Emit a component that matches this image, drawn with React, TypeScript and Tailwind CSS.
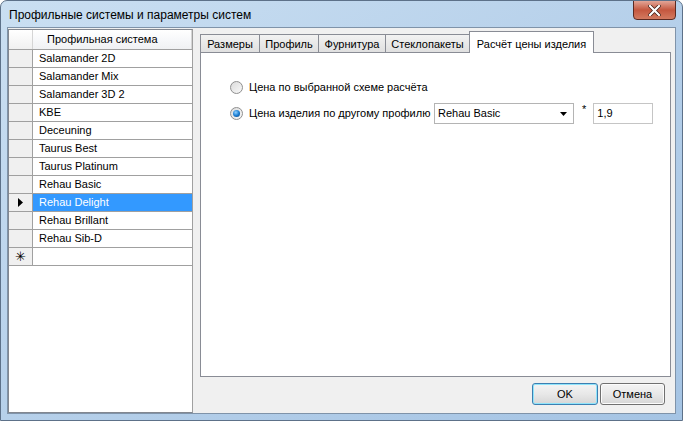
import React from 'react';

const systems = [
  'Salamander 2D',
  'Salamander Mix',
  'Salamander 3D 2',
  'KBE',
  'Deceuning',
  'Taurus Best',
  'Taurus Platinum',
  'Rehau Basic',
  'Rehau Delight',
  'Rehau Brillant',
  'Rehau Sib-D',
];

const tabs = [
  { label: 'Размеры', w: 'w-[60px]' },
  { label: 'Профиль', w: 'w-[60px]' },
  { label: 'Фурнитура', w: 'w-[68px]' },
  { label: 'Стеклопакеты', w: 'w-[85px]' },
];

function Radio({ checked }: { checked?: boolean }) {
  return (
    <span className="flex h-[13px] w-[13px] items-center justify-center rounded-full border border-[#8f8f8f] bg-gradient-to-br from-[#dcdcdc] to-[#f8f8f8]">
      {checked && (
        <span className="h-[7px] w-[7px] rounded-full bg-[radial-gradient(circle_at_40%_35%,#8fd0ff_0%,#1c7fd4_50%,#0a3f7a_100%)]" />
      )}
    </span>
  );
}

export default function App() {
  const selected = 8;

  return (
    <div
      className="flex h-[421px] w-[683px] flex-col overflow-hidden rounded-t-[7px] border border-[#5d7189] bg-gradient-to-br from-[#cadff2] via-[#b6d0ea] to-[#a5c4e4] text-[11px] text-black"
      style={{ fontFamily: '"Liberation Sans", Arial, sans-serif' }}
    >
      {/* title bar */}
      <div className="relative flex h-[26px] shrink-0 items-center pl-[8px] pt-[2px]">
        <span className="text-[12px] text-black">Профильные системы и параметры систем</span>
        <div className="absolute right-[6px] top-[-1px] flex h-[20px] w-[43px] items-center justify-center rounded-b-[4px] border border-[#5b2a22] bg-gradient-to-b from-[#e2a597] via-[#c4573f] to-[#d27a60]">
          <svg width="13" height="11" viewBox="0 0 13 11">
            <path d="M2 1 L11 10 M11 1 L2 10" stroke="#3c1a12" strokeWidth="3.6" strokeLinecap="square" />
            <path d="M2 1 L11 10 M11 1 L2 10" stroke="#ffffff" strokeWidth="2.2" strokeLinecap="square" />
          </svg>
        </div>
      </div>

      {/* client area */}
      <div className="mx-[6px] mb-[6px] flex flex-1 flex-col border border-[#7f93a9] bg-[#f0f0f0]">
        <div className="flex flex-1">
          {/* grid */}
          <div className="mt-[1px] flex w-[185px] flex-col border border-l-[#828790] border-t-[#828790] border-b-[#828790] border-r-[#a0a0a0] bg-white">
            <div className="flex h-[20px] border-b border-[#a0a0a0]">
              <div className="w-[24px] border-r border-[#d5d5d5] bg-gradient-to-b from-[#ffffff] to-[#f0f0f0]" />
              <div className="flex flex-1 items-center border-r border-[#d5d5d5] bg-gradient-to-b from-[#ffffff] via-[#f7f8fa] to-[#f0f1f3] pl-[14px]">
                Профильная система
              </div>
            </div>
            {systems.map((s, i) => (
              <div key={s} className="flex h-[18px] border-b border-[#a0a0a0]">
                <div className="flex w-[24px] items-center justify-center border-r border-[#a0a0a0] bg-[#f0f0f0]">
                  {i === selected && (
                    <svg width="5" height="9" viewBox="0 0 5 9">
                      <path d="M0 0 L5 4.5 L0 9 Z" fill="#000" />
                    </svg>
                  )}
                </div>
                <div
                  className={`flex flex-1 items-center pl-[6px] ${i === selected ? 'bg-[#3399ff] text-white' : 'bg-white'}`}
                >
                  {s}
                </div>
              </div>
            ))}
            <div className="flex h-[18px] border-b border-[#a0a0a0]">
              <div className="flex w-[24px] items-center justify-center border-r border-[#a0a0a0] bg-[#f0f0f0] text-[13px] leading-none">
                ✳
              </div>
              <div className="flex-1 bg-white" />
            </div>
            <div className="flex-1 bg-white" />
          </div>

          {/* right side */}
          <div className="ml-[7px] mr-[4px] flex flex-1 flex-col pt-[3px]">
            <div className="flex h-[21px] items-end">
              {tabs.map((t) => (
                <div
                  key={t.label}
                  className={`-mr-px flex h-[18px] ${t.w} items-center justify-center border border-b-0 border-[#898c95] bg-gradient-to-b from-[#f2f2f2] to-[#e0e0e0] pt-[1px]`}
                >
                  {t.label}
                </div>
              ))}
              <div className="relative z-10 -mb-px flex h-[22px] w-[125px] items-start justify-center border border-b-0 border-[#898c95] bg-white pt-[4px]">
                Расчёт цены изделия
              </div>
            </div>
            <div className="flex h-[325px] flex-col border border-[#898c95] bg-white pl-[29px] pt-[27px]">
              <div className="flex h-[14px] items-center gap-[6px]">
                <Radio />
                <span>Цена по выбранной схеме расчёта</span>
              </div>
              <div className="mt-[9px] flex h-[21px] items-center">
                <Radio checked />
                <span className="ml-[6px] w-[181px] whitespace-nowrap">Цена изделия по другому профилю</span>
                <div className="ml-[4px] flex h-[21px] w-[140px] items-center justify-between border border-[#b4b4b4] bg-white pl-[3px] pr-[6px]">
                  <span>Rehau Basic</span>
                  <svg width="7" height="4" viewBox="0 0 7 4">
                    <path d="M0 0 L7 0 L3.5 4 Z" fill="#000" />
                  </svg>
                </div>
                <span className="mb-[8px] ml-[8px]">*</span>
                <div className="ml-[7px] flex h-[21px] w-[60px] items-center border border-[#c5c5c5] bg-white pl-[3px]">
                  1,9
                </div>
              </div>
            </div>
            <div className="flex flex-1 items-start justify-end gap-[2px] pr-[6px] pt-[6px]">
              <div className="flex h-[22px] w-[66px] items-center justify-center rounded-[3px] border border-[#3c7fb1] bg-gradient-to-b from-[#f4f4f4] via-[#e8e8e8] to-[#d6d6d6] shadow-[inset_0_0_0_1px_#8fe4fb]">
                OK
              </div>
              <div className="flex h-[22px] w-[65px] items-center justify-center rounded-[3px] border border-[#707070] bg-gradient-to-b from-[#f4f4f4] via-[#e8e8e8] to-[#d6d6d6] shadow-[inset_0_0_0_1px_#fcfcfc]">
                Отмена
              </div>
            </div>
          </div>
        </div>
      </div>
    </div>
  );
}
